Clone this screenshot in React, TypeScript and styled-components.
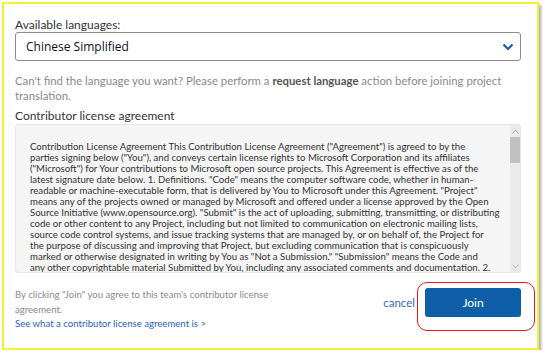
import React from "react"
import styled, { createGlobalStyle } from "styled-components"

const GlobalStyle = createGlobalStyle`
	html, body {
		margin: 0;
		padding: 0;
		background: #ffffff;
	}
	body {
		font-family: Lato, "Open Sans", Arial, sans-serif;
		overflow: hidden;
	}
`

const agreementLines = [
	'Contribution License Agreement This Contribution License Agreement ("Agreement") is agreed to by the',
	'parties signing below ("You"), and conveys certain license rights to Microsoft Corporation and its affiliates',
	'("Microsoft") for Your contributions to Microsoft open source projects. This Agreement is effective as of the',
	'latest signature date below. 1. Definitions. "Code" means the computer software code, whether in human-',
	'readable or machine-executable form, that is delivered by You to Microsoft under this Agreement. "Project"',
	"means any of the projects owned or managed by Microsoft and offered under a license approved by the Open",
	'Source Initiative (www.opensource.org). "Submit" is the act of uploading, submitting, transmitting, or distributing',
	"code or other content to any Project, including but not limited to communication on electronic mailing lists,",
	"source code control systems, and issue tracking systems that are managed by, or on behalf of, the Project for",
	"the purpose of discussing and improving that Project, but excluding communication that is conspicuously",
	'marked or otherwise designated in writing by You as "Not a Submission." "Submission" means the Code and',
	"any other copyrightable material Submitted by You, including any associated comments and documentation. 2.",
]

const JoinDialog = () => {
	return (
		<Frame>
			<Label>Available languages:</Label>
			<Select>
				<SelectValue>Chinese Simplified</SelectValue>
				<svg width="12" height="8" viewBox="0 0 12 8">
					<path d="M1.5 1.5 L6 6 L10.5 1.5" fill="none" stroke="#1a5ea8" strokeWidth="2.2" />
				</svg>
			</Select>
			<Hint>
				Can't find the language you want? Please perform a <strong>request language</strong> action before
				joining project
				<br />
				translation.
			</Hint>
			<Heading>Contributor license agreement</Heading>
			<AgreementBox>
				<AgreementText>
					{agreementLines.map((line, i) => (
						<React.Fragment key={i}>
							{line}
							<br />
						</React.Fragment>
					))}
				</AgreementText>
				<Scrollbar>
					<ScrollArrow>
						<svg width="7" height="5" viewBox="0 0 7 5">
							<path d="M0.5 4.5 L3.5 1 L6.5 4.5" fill="none" stroke="#a8a8a8" strokeWidth="1" />
						</svg>
					</ScrollArrow>
					<Thumb />
					<TrackFill />
					<ScrollArrow>
						<svg width="7" height="5" viewBox="0 0 7 5">
							<path d="M0.5 0.5 L3.5 4 L6.5 0.5" fill="none" stroke="#b8b8b8" strokeWidth="1" />
						</svg>
					</ScrollArrow>
				</Scrollbar>
			</AgreementBox>
			<Footer>
				<FooterText>
					By clicking "Join" you agree to this team's contributor license
					<br />
					agreement.
					<br />
					<FooterLink>See what a contributor license agreement is &gt;</FooterLink>
				</FooterText>
				<Actions>
					<CancelLink>cancel</CancelLink>
					<JoinButton>
						Join
						<Highlight />
					</JoinButton>
				</Actions>
			</Footer>
		</Frame>
	)
}

export default function App() {
	return (
		<>
			<GlobalStyle />
			<JoinDialog />
		</>
	)
}

const Frame = styled.div`
	box-sizing: border-box;
	margin: 2px 0 0 2px;
	width: 537px;
	height: 348px;
	border: 2px solid #f3ef3c;
	box-shadow: 2px 3px 3px rgba(0, 0, 0, 0.35);
	background: #ffffff;
	padding: 14px 16px 0 11px;
	display: flex;
	flex-direction: column;
`

const Label = styled.div`
	font-size: 12px;
	line-height: 14px;
	color: #333333;
`

const Select = styled.div`
	box-sizing: border-box;
	height: 29px;
	border: 1px solid #8c8c8c;
	border-radius: 3px;
	display: flex;
	align-items: center;
	justify-content: space-between;
	padding: 0 6px 0 10px;
`

const SelectValue = styled.span`
	font-family: "Open Sans", "Noto Sans", sans-serif;
	font-size: 12px;
	color: #10102a;
`

const Hint = styled.p`
	margin: 12px 0 0;
	font-size: 11.35px;
	line-height: 15px;
	color: #8a8a8a;
	white-space: nowrap;

	strong {
		color: #555555;
		font-weight: 700;
	}
`

const Heading = styled.div`
	margin-top: 6px;
	margin-bottom: 1px;
	font-size: 12px;
	line-height: 14px;
	color: #333333;
`

const AgreementBox = styled.div`
	box-sizing: border-box;
	height: 149px;
	border: 1px solid #e6e6e6;
	border-radius: 3px;
	background: #f5f5f5;
	display: flex;
	overflow: hidden;
`

const AgreementText = styled.p`
	flex: 1;
	margin: 0;
	padding: 16px 0 0 14px;
	font-size: 9.6px;
	line-height: 11px;
	color: #333333;
	white-space: nowrap;
	overflow: hidden;
`

const Scrollbar = styled.div`
	width: 10px;
	background: #ebebeb;
	display: flex;
	flex-direction: column;
`

const ScrollArrow = styled.div`
	height: 12px;
	display: flex;
	align-items: center;
	justify-content: center;
`

const Thumb = styled.div`
	height: 26px;
	background: #c1c1c1;
`

const TrackFill = styled.div`
	flex: 1;
`

const Footer = styled.div`
	margin-top: 15px;
	display: flex;
	justify-content: space-between;
	align-items: flex-start;
`

const FooterText = styled.p`
	margin: 0;
	font-size: 9.6px;
	line-height: 14.5px;
	color: #8a8a8a;
`

const FooterLink = styled.a`
	color: #2c5fc0;
	text-decoration: none;
`

const Actions = styled.div`
	display: flex;
	align-items: center;
	gap: 10px;
`

const CancelLink = styled.a`
	font-size: 11.5px;
	color: #3a68c4;
	cursor: pointer;
`

const JoinButton = styled.button`
	position: relative;
	box-sizing: border-box;
	width: 96px;
	height: 29px;
	border: none;
	border-radius: 3px;
	background: #0f5fa8;
	color: #ffffff;
	font-family: Lato, "Open Sans", Arial, sans-serif;
	font-size: 12px;
	cursor: pointer;
`

const Highlight = styled.span`
	position: absolute;
	left: -8px;
	top: -6px;
	right: -14px;
	bottom: -14px;
	border: 1.5px solid #e81818;
	border-radius: 10px;
	pointer-events: none;
`
